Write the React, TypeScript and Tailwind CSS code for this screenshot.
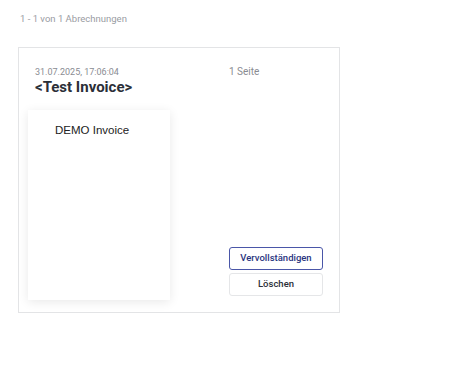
export default function App() {
  return (
    <main className="min-h-[370px] bg-white px-[18px] pt-[12px] font-['Roboto',sans-serif]">
      <div className="pl-[2px] text-[9.5px] leading-[13px] text-[#9a9ca3]">1 - 1 von 1 Abrechnungen</div>

      <div className="mt-[22px] flex h-[266px] w-[322px] border border-[#e3e4e6] pl-[16px] pr-[16px] pt-[18px] pb-[16px]">
        <div className="flex w-[195px] flex-col">
          <div className="text-[9px] leading-[12px] text-[#8a8c92]">31.07.2025, 17:06:04</div>
          <h2 className="text-[15px] font-bold leading-[18px] text-[#2b2f38]">&lt;Test Invoice&gt;</h2>
          <div className="-ml-[7px] mt-[14px] h-[190px] w-[142px] shrink-0 bg-white pl-[27px] pt-[12px] shadow-[0_2px_10px_rgba(0,0,0,0.09)]">
            <div className="font-['Liberation_Sans',sans-serif] text-[11.5px] text-[#222]">DEMO Invoice</div>
          </div>
        </div>
        <div className="flex flex-1 flex-col">
          <div className="text-[10px] leading-[12px] text-[#8a8c92]">1 Seite</div>
          <div className="mt-auto flex flex-col gap-[3px]">
            <button className="h-[23px] w-[94px] rounded-[3px] border border-[#4a56a8] text-[9.5px] font-medium text-[#2a3580]">
              Vervollständigen
            </button>
            <button className="h-[23px] w-[94px] rounded-[3px] border border-[#e5e6e8] text-[9.5px] font-medium text-[#2b2f38]">
              Löschen
            </button>
          </div>
        </div>
      </div>
    </main>
  )
}
